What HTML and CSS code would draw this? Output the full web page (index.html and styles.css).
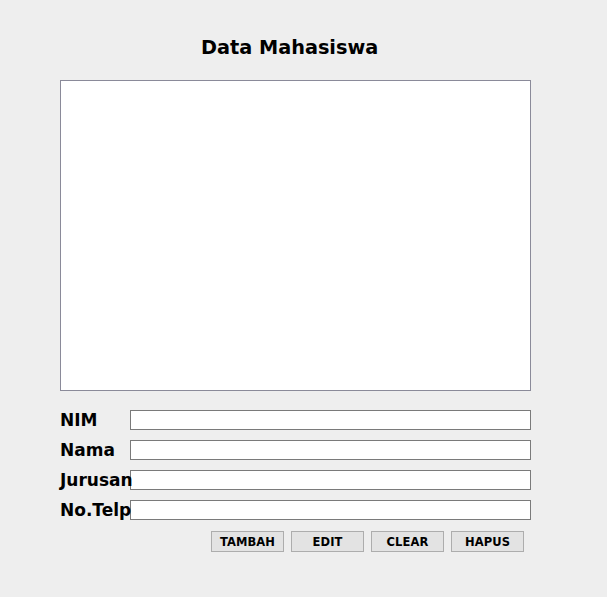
FILE: index.html
```html
<!DOCTYPE html>
<html>
<head>
<meta charset="utf-8">
<link rel="stylesheet" href="styles.css">
</head>
<body>
<div class="app">
  <h1 class="title">Data Mahasiswa</h1>
  <div class="table-area"></div>
  <div class="form">
    <div class="row"><span class="label">NIM</span><div class="field"></div></div>
    <div class="row"><span class="label">Nama</span><div class="field"></div></div>
    <div class="row"><span class="label">Jurusan</span><div class="field"></div></div>
    <div class="row"><span class="label">No.Telp</span><div class="field"></div></div>
  </div>
  <div class="buttons">
    <button class="btn">TAMBAH</button>
    <button class="btn">EDIT</button>
    <button class="btn">CLEAR</button>
    <button class="btn">HAPUS</button>
  </div>
</div>
</body>
</html>
```
FILE: styles.css
```css
html, body {
  margin: 0;
  padding: 0;
  background: #eeeeee;
}
.app {
  width: 607px;
  height: 597px;
  box-sizing: border-box;
  padding-top: 36px;
  font-family: "DejaVu Sans", Tahoma, sans-serif;
  font-weight: bold;
  color: #000;
}
.title {
  margin: 0 0 0 201px;
  font-size: 19.3px;
  line-height: 24px;
  height: 24px;
  font-weight: bold;
  letter-spacing: 0;
}
.table-area {
  margin: 20px 0 0 60px;
  width: 471px;
  height: 311px;
  box-sizing: border-box;
  background: #ffffff;
  border: 1px solid #8a8a99;
}
.form {
  margin: 19px 0 0 60px;
  display: flex;
  flex-direction: column;
  gap: 10px;
}
.row {
  display: flex;
  align-items: center;
  height: 20px;
}
.label {
  position: relative;
  z-index: 1;
  width: 70px;
  flex: none;
  font-size: 17px;
  white-space: nowrap;
  overflow: visible;
}
.field {
  width: 401px;
  height: 20px;
  box-sizing: border-box;
  background: #fff;
  border: 1px solid #7a7a7a;
}
.buttons {
  margin: 11px 0 0 211px;
  display: flex;
  gap: 7px;
}
.btn {
  width: 73px;
  height: 21px;
  box-sizing: border-box;
  padding: 0;
  margin: 0;
  background: #e3e3e3;
  border: 1px solid #adadad;
  font-family: "DejaVu Sans", Tahoma, sans-serif;
  font-weight: bold;
  font-size: 11.5px;
  letter-spacing: 0.1px;
  color: #000;
}
```
